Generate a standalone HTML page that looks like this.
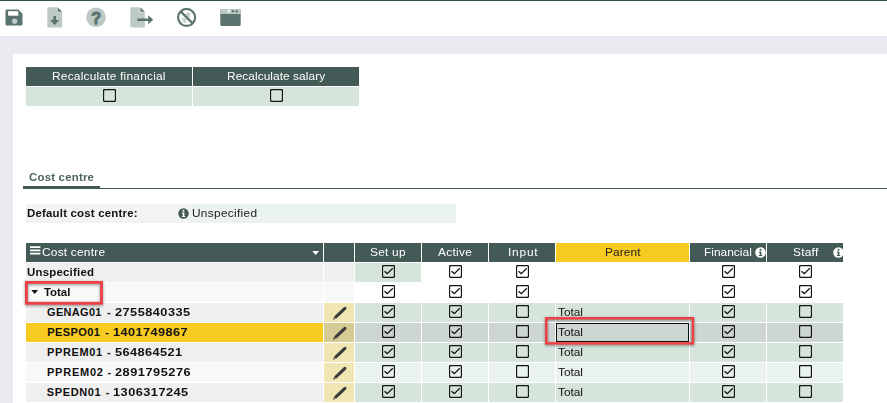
<!DOCTYPE html>
<html><head><meta charset="utf-8"><title>Cost centre</title>
<style>
*{box-sizing:border-box;margin:0;padding:0}
html,body{width:887px;height:403px;overflow:hidden;background:#eaebf0}
body{position:relative;font-family:"Liberation Sans",sans-serif;font-size:11px;color:#111}
.ab,.cb,.t,.bx{position:absolute}
.t{white-space:nowrap;line-height:14px;height:14px;transform-origin:0 0}
.w{color:#fff}
.b{font-weight:bold}
.c{text-align:center}
</style></head><body>

<div class="bx" style="left:0px;top:0px;width:887px;height:36px;background:#fff;"></div>
<div class="bx" style="left:0px;top:0px;width:887px;height:1px;background:#34504b;"></div>
<div class="bx" style="left:13px;top:54px;width:874px;height:349px;background:#fff;"></div>
<svg class="ab" style="left:5px;top:9px" width="18" height="17" viewBox="0 0 18 17"><path d="M0.5 2 Q0.5 0.5 2 0.5 L13.3 0.5 L17.5 4.7 L17.5 15 Q17.5 16.5 16 16.5 L2 16.5 Q0.5 16.5 0.5 15 Z" fill="#5b736e"/><rect x="3.1" y="2.2" width="10.2" height="4.5" fill="#fff"/><circle cx="9.6" cy="12.3" r="2.7" fill="#bcc9c5"/></svg>
<svg class="ab" style="left:47px;top:7px" width="16" height="21" viewBox="0 0 16 21"><path d="M1.5 0.3 L10 0.3 L10 5.3 L15.2 5.3 L15.2 19.2 Q15.2 20.5 14 20.5 L1.5 20.5 Q0.3 20.5 0.3 19.2 L0.3 1.5 Q0.3 0.3 1.5 0.3 Z" fill="#bcc9c5"/><path d="M10.6 0.3 L15.2 4.8 L10.6 4.8 Z" fill="#5b736e"/><path d="M6.4 9 L9 9 L9 13 L12.3 13 L7.7 18 L3.1 13 L6.4 13 Z" fill="#5b736e"/></svg>
<svg class="ab" style="left:86px;top:7px" width="20" height="20" viewBox="0 0 20 20"><circle cx="10" cy="10.3" r="9.8" fill="#bcc9c5"/><text x="10.1" y="17.1" text-anchor="middle" font-family="Liberation Sans, sans-serif" font-weight="bold" font-size="16.2" fill="#5b736e" stroke="#5b736e" stroke-width="0.9">?</text></svg>
<svg class="ab" style="left:130px;top:7px" width="24" height="21" viewBox="0 0 24 21"><path d="M1.5 0.3 L9.7 0.3 L9.7 5.3 L14.9 5.3 L14.9 19.2 Q14.9 20.5 13.7 20.5 L1.5 20.5 Q0.3 20.5 0.3 19.2 L0.3 1.5 Q0.3 0.3 1.5 0.3 Z" fill="#bcc9c5"/><path d="M10.3 0.3 L14.9 4.8 L10.3 4.8 Z" fill="#5b736e"/><path d="M7.3 11.4 L18.2 11.4 L18.2 8.2 L23.2 12.7 L18.2 17.2 L18.2 14 L7.3 14 Z" fill="#5b736e"/></svg>
<svg class="ab" style="left:176px;top:7px" width="21" height="21" viewBox="0 0 21 21"><g stroke="#bcc9c5" stroke-width="1.3" fill="none"><path d="M9.5 6.5 L14.5 9.5 M10.5 9 L14.8 6.2 M12 5 L12.6 10.5 M5.5 11.5 L10.8 14.8 M6.2 15 L10.5 11.8 M8 10.8 L8.8 16"/></g><circle cx="10.6" cy="10.45" r="8.5" fill="none" stroke="#5b736e" stroke-width="2.2"/><path d="M4.6 4.4 L16.6 16.4" stroke="#5b736e" stroke-width="2.3"/></svg>
<svg class="ab" style="left:220px;top:9px" width="21" height="18" viewBox="0 0 21 18"><rect x="0.3" y="0" width="20.4" height="16.9" rx="1.6" fill="#5b736e"/><path d="M0.3 4.9 L0.3 1.6 Q0.3 0 1.9 0 L19.1 0 Q20.7 0 20.7 1.6 L20.7 4.9 Z" fill="#bcc9c5"/><rect x="7.6" y="1.2" width="2.6" height="2.1" fill="#fff"/><circle cx="12.8" cy="2.3" r="1.2" fill="#5b736e"/><circle cx="16.7" cy="2.3" r="1.2" fill="#5b736e"/></svg>
<div class="bx" style="left:26px;top:67px;width:166px;height:19px;background:#435a56;"></div>
<div class="bx" style="left:193px;top:67px;width:166px;height:19px;background:#435a56;"></div>
<div class="bx" style="left:26px;top:87px;width:166px;height:19px;background:#d5e5db;"></div>
<div class="bx" style="left:193px;top:87px;width:166px;height:19px;background:#d5e5db;"></div>
<div class="t w" style="left:52.3px;top:69px;letter-spacing:0.210px;transform:scaleX(1.08);">Recalculate financial</div>
<div class="t w" style="left:227.4px;top:69px;letter-spacing:0.056px;transform:scaleX(1.08);">Recalculate salary</div>
<svg class="cb" style="left:103px;top:89px" width="13" height="13" viewBox="0 0 13 13"><rect x="0.5" y="0.5" width="12" height="12" rx="1.4" ry="1.4" fill="none" stroke="#151515" stroke-width="1.3"/></svg>
<svg class="cb" style="left:270px;top:89px" width="13" height="13" viewBox="0 0 13 13"><rect x="0.5" y="0.5" width="12" height="12" rx="1.4" ry="1.4" fill="none" stroke="#151515" stroke-width="1.3"/></svg>
<div class="t b" style="left:29px;top:170px;letter-spacing:0.197px;transform:scaleX(1.04);color:#4a645f;">Cost centre</div>
<div class="bx" style="left:23px;top:186px;width:77px;height:3px;background:#435a56;"></div>
<div class="bx" style="left:100px;top:188px;width:787px;height:1px;background:#435a56;"></div>
<div class="bx" style="left:26px;top:204px;width:164px;height:19px;background:#f3f3f3;"></div>
<div class="bx" style="left:190px;top:204px;width:266px;height:19px;background:#eaf3ee;"></div>
<div class="t b" style="left:27.2px;top:206px;letter-spacing:0.192px;transform:scaleX(1.04);">Default cost centre:</div>
<svg class="ab" style="left:178px;top:208px" width="11" height="11" viewBox="0 0 11 11"><circle cx="5.5" cy="5.5" r="5.2" fill="#435a56"/><rect x="4.7" y="4.6" width="1.7" height="4" fill="#fff"/><rect x="4" y="4.6" width="1.5" height="1" fill="#fff"/><rect x="3.9" y="8" width="3.3" height="1" fill="#fff"/><circle cx="5.5" cy="2.7" r="1" fill="#fff"/></svg>
<div class="t " style="left:192px;top:206px;letter-spacing:0.270px;transform:scaleX(1.08);color:#222;">Unspecified</div>
<div class="bx" style="left:26px;top:243px;width:297px;height:19px;background:#435a56;"></div>
<div class="bx" style="left:324px;top:243px;width:30px;height:19px;background:#435a56;"></div>
<div class="bx" style="left:355px;top:243px;width:66px;height:19px;background:#435a56;"></div>
<div class="bx" style="left:422px;top:243px;width:66px;height:19px;background:#435a56;"></div>
<div class="bx" style="left:489px;top:243px;width:66px;height:19px;background:#435a56;"></div>
<div class="bx" style="left:556px;top:243px;width:133px;height:19px;background:#f7cb20;"></div>
<div class="bx" style="left:690px;top:243px;width:76px;height:19px;background:#435a56;"></div>
<div class="bx" style="left:767px;top:243px;width:76px;height:19px;background:#435a56;"></div>
<svg class="ab" style="left:30px;top:246px" width="11" height="9" viewBox="0 0 11 9"><path d="M0 0.2 H10.4 V2 H0 Z M0 3.5 H10.4 V5.3 H0 Z M0 6.8 H10.4 V8.6 H0 Z" fill="#fff"/></svg>
<div class="t w" style="left:42px;top:245px;letter-spacing:0.208px;transform:scaleX(1.08);">Cost centre</div>
<svg class="ab" style="left:312px;top:251px" width="8" height="5" viewBox="0 0 8 5"><path d="M0.3 0 L7 0 L3.65 4 Z" fill="#fff"/></svg>
<div class="t w" style="left:370.4px;top:245px;letter-spacing:0.212px;transform:scaleX(1.08);">Set up</div>
<div class="t w" style="left:438.3px;top:245px;letter-spacing:0.284px;transform:scaleX(1.08);">Active</div>
<div class="t w" style="left:507.7px;top:245px;letter-spacing:0.735px;transform:scaleX(1.08);">Input</div>
<div class="t " style="left:605.2px;top:245px;letter-spacing:0.090px;transform:scaleX(1.08);color:#222;">Parent</div>
<div class="t w" style="left:704.3px;top:245px;letter-spacing:0.029px;transform:scaleX(1.08);">Financial</div>
<div class="t w" style="left:792.8px;top:245px;letter-spacing:0.224px;transform:scaleX(1.08);">Staff</div>
<svg class="ab" style="left:755px;top:247px" width="11" height="11" viewBox="0 0 11 11"><circle cx="5.5" cy="5.5" r="5.3" fill="#fff"/><rect x="4.7" y="4.6" width="1.7" height="4" fill="#435a56"/><rect x="4" y="4.6" width="1.5" height="1" fill="#435a56"/><rect x="3.9" y="8" width="3.3" height="1" fill="#435a56"/><circle cx="5.5" cy="2.7" r="1" fill="#435a56"/></svg>
<svg class="ab" style="left:833px;top:247px" width="10" height="11" viewBox="0 0 10 11"><circle cx="5.5" cy="5.5" r="5.3" fill="#fff"/><rect x="4.7" y="4.6" width="1.7" height="4" fill="#435a56"/><rect x="4" y="4.6" width="1.5" height="1" fill="#435a56"/><rect x="3.9" y="8" width="3.3" height="1" fill="#435a56"/><circle cx="5.5" cy="2.7" r="1" fill="#435a56"/></svg>
<div class="bx" style="left:26px;top:263px;width:297px;height:19px;background:#efefef;"></div>
<div class="bx" style="left:324px;top:263px;width:30px;height:19px;background:#efefef;"></div>
<div class="bx" style="left:355px;top:263px;width:66px;height:19px;background:#d5e5db;"></div>
<div class="bx" style="left:422px;top:263px;width:66px;height:19px;background:#fff;"></div>
<div class="bx" style="left:489px;top:263px;width:66px;height:19px;background:#fff;"></div>
<div class="bx" style="left:556px;top:263px;width:133px;height:19px;background:#fff;"></div>
<div class="bx" style="left:690px;top:263px;width:76px;height:19px;background:#fff;"></div>
<div class="bx" style="left:767px;top:263px;width:76px;height:19px;background:#fff;"></div>
<svg class="cb" style="left:382px;top:265px" width="13" height="13" viewBox="0 0 13 13"><rect x="0.5" y="0.5" width="12" height="12" rx="1.4" ry="1.4" fill="none" stroke="#151515" stroke-width="1.3"/><path d="M2.5 6.3 L5.3 8.6 L10.8 3.3" fill="none" stroke="#151515" stroke-width="1.3"/></svg>
<svg class="cb" style="left:449px;top:265px" width="13" height="13" viewBox="0 0 13 13"><rect x="0.5" y="0.5" width="12" height="12" rx="1.4" ry="1.4" fill="none" stroke="#151515" stroke-width="1.3"/><path d="M2.5 6.3 L5.3 8.6 L10.8 3.3" fill="none" stroke="#151515" stroke-width="1.3"/></svg>
<svg class="cb" style="left:516px;top:265px" width="13" height="13" viewBox="0 0 13 13"><rect x="0.5" y="0.5" width="12" height="12" rx="1.4" ry="1.4" fill="none" stroke="#151515" stroke-width="1.3"/><path d="M2.5 6.3 L5.3 8.6 L10.8 3.3" fill="none" stroke="#151515" stroke-width="1.3"/></svg>
<svg class="cb" style="left:722px;top:265px" width="13" height="13" viewBox="0 0 13 13"><rect x="0.5" y="0.5" width="12" height="12" rx="1.4" ry="1.4" fill="none" stroke="#151515" stroke-width="1.3"/><path d="M2.5 6.3 L5.3 8.6 L10.8 3.3" fill="none" stroke="#151515" stroke-width="1.3"/></svg>
<svg class="cb" style="left:799px;top:265px" width="13" height="13" viewBox="0 0 13 13"><rect x="0.5" y="0.5" width="12" height="12" rx="1.4" ry="1.4" fill="none" stroke="#151515" stroke-width="1.3"/><path d="M2.5 6.3 L5.3 8.6 L10.8 3.3" fill="none" stroke="#151515" stroke-width="1.3"/></svg>
<div class="t b" style="left:27px;top:265px;letter-spacing:0.206px;transform:scaleX(1.04);">Unspecified</div>
<div class="bx" style="left:26px;top:283px;width:297px;height:19px;background:#f8f8f8;"></div>
<div class="bx" style="left:324px;top:283px;width:30px;height:19px;background:#f8f8f8;"></div>
<div class="bx" style="left:355px;top:283px;width:66px;height:19px;background:#fff;"></div>
<div class="bx" style="left:422px;top:283px;width:66px;height:19px;background:#fff;"></div>
<div class="bx" style="left:489px;top:283px;width:66px;height:19px;background:#fff;"></div>
<div class="bx" style="left:556px;top:283px;width:133px;height:19px;background:#fff;"></div>
<div class="bx" style="left:690px;top:283px;width:76px;height:19px;background:#fff;"></div>
<div class="bx" style="left:767px;top:283px;width:76px;height:19px;background:#fff;"></div>
<svg class="cb" style="left:382px;top:285px" width="13" height="13" viewBox="0 0 13 13"><rect x="0.5" y="0.5" width="12" height="12" rx="1.4" ry="1.4" fill="none" stroke="#151515" stroke-width="1.3"/><path d="M2.5 6.3 L5.3 8.6 L10.8 3.3" fill="none" stroke="#151515" stroke-width="1.3"/></svg>
<svg class="cb" style="left:449px;top:285px" width="13" height="13" viewBox="0 0 13 13"><rect x="0.5" y="0.5" width="12" height="12" rx="1.4" ry="1.4" fill="none" stroke="#151515" stroke-width="1.3"/><path d="M2.5 6.3 L5.3 8.6 L10.8 3.3" fill="none" stroke="#151515" stroke-width="1.3"/></svg>
<svg class="cb" style="left:516px;top:285px" width="13" height="13" viewBox="0 0 13 13"><rect x="0.5" y="0.5" width="12" height="12" rx="1.4" ry="1.4" fill="none" stroke="#151515" stroke-width="1.3"/><path d="M2.5 6.3 L5.3 8.6 L10.8 3.3" fill="none" stroke="#151515" stroke-width="1.3"/></svg>
<svg class="cb" style="left:722px;top:285px" width="13" height="13" viewBox="0 0 13 13"><rect x="0.5" y="0.5" width="12" height="12" rx="1.4" ry="1.4" fill="none" stroke="#151515" stroke-width="1.3"/><path d="M2.5 6.3 L5.3 8.6 L10.8 3.3" fill="none" stroke="#151515" stroke-width="1.3"/></svg>
<svg class="cb" style="left:799px;top:285px" width="13" height="13" viewBox="0 0 13 13"><rect x="0.5" y="0.5" width="12" height="12" rx="1.4" ry="1.4" fill="none" stroke="#151515" stroke-width="1.3"/><path d="M2.5 6.3 L5.3 8.6 L10.8 3.3" fill="none" stroke="#151515" stroke-width="1.3"/></svg>
<div class="t b" style="left:44.2px;top:285px;letter-spacing:-0.021px;transform:scaleX(1.04);">Total</div>
<div class="bx" style="left:26px;top:303px;width:297px;height:19px;background:#efefef;"></div>
<div class="bx" style="left:324px;top:303px;width:30px;height:19px;background:#f0e6b4;"></div>
<svg class="ab" style="left:332px;top:306px" width="15" height="15" viewBox="0 0 15 15"><path d="M0.9 13.8 L1.9 11.6 L2.6 11.9 L2.2 10.4 L11.8 1.2 Q13.1 0.2 14.1 1.15 Q15 2.1 14 3.4 L4.4 12.6 L2.9 12.3 L3.1 12.9 Z" fill="#3c3c3c"/></svg>
<div class="bx" style="left:355px;top:303px;width:66px;height:19px;background:#d5e5db;"></div>
<div class="bx" style="left:422px;top:303px;width:66px;height:19px;background:#d5e5db;"></div>
<div class="bx" style="left:489px;top:303px;width:66px;height:19px;background:#d5e5db;"></div>
<div class="bx" style="left:556px;top:303px;width:133px;height:19px;background:#d5e5db;"></div>
<div class="bx" style="left:690px;top:303px;width:76px;height:19px;background:#d5e5db;"></div>
<div class="bx" style="left:767px;top:303px;width:76px;height:19px;background:#d5e5db;"></div>
<svg class="cb" style="left:382px;top:305px" width="13" height="13" viewBox="0 0 13 13"><rect x="0.5" y="0.5" width="12" height="12" rx="1.4" ry="1.4" fill="none" stroke="#151515" stroke-width="1.3"/><path d="M2.5 6.3 L5.3 8.6 L10.8 3.3" fill="none" stroke="#151515" stroke-width="1.3"/></svg>
<svg class="cb" style="left:449px;top:305px" width="13" height="13" viewBox="0 0 13 13"><rect x="0.5" y="0.5" width="12" height="12" rx="1.4" ry="1.4" fill="none" stroke="#151515" stroke-width="1.3"/><path d="M2.5 6.3 L5.3 8.6 L10.8 3.3" fill="none" stroke="#151515" stroke-width="1.3"/></svg>
<svg class="cb" style="left:516px;top:305px" width="13" height="13" viewBox="0 0 13 13"><rect x="0.5" y="0.5" width="12" height="12" rx="1.4" ry="1.4" fill="none" stroke="#151515" stroke-width="1.3"/></svg>
<svg class="cb" style="left:722px;top:305px" width="13" height="13" viewBox="0 0 13 13"><rect x="0.5" y="0.5" width="12" height="12" rx="1.4" ry="1.4" fill="none" stroke="#151515" stroke-width="1.3"/><path d="M2.5 6.3 L5.3 8.6 L10.8 3.3" fill="none" stroke="#151515" stroke-width="1.3"/></svg>
<svg class="cb" style="left:799px;top:305px" width="13" height="13" viewBox="0 0 13 13"><rect x="0.5" y="0.5" width="12" height="12" rx="1.4" ry="1.4" fill="none" stroke="#151515" stroke-width="1.3"/></svg>
<div class="t " style="left:558.4px;top:305px;letter-spacing:-0.049px;transform:scaleX(1.08);color:#111;">Total</div>
<div class="t b" style="left:47px;top:305px;letter-spacing:0.320px;">GENAG01</div>
<div class="t b" style="left:106.9px;top:305px;">-</div>
<div class="t b" style="left:114.7px;top:305px;letter-spacing:0.395px;transform:scaleX(1.16);">2755840335</div>
<div class="bx" style="left:26px;top:323px;width:297px;height:19px;background:#f7cb20;"></div>
<div class="bx" style="left:324px;top:323px;width:30px;height:19px;background:#d6cb95;"></div>
<svg class="ab" style="left:332px;top:326px" width="15" height="15" viewBox="0 0 15 15"><path d="M0.9 13.8 L1.9 11.6 L2.6 11.9 L2.2 10.4 L11.8 1.2 Q13.1 0.2 14.1 1.15 Q15 2.1 14 3.4 L4.4 12.6 L2.9 12.3 L3.1 12.9 Z" fill="#3c3c3c"/></svg>
<div class="bx" style="left:355px;top:323px;width:66px;height:19px;background:#cdd6d2;"></div>
<div class="bx" style="left:422px;top:323px;width:66px;height:19px;background:#cdd6d2;"></div>
<div class="bx" style="left:489px;top:323px;width:66px;height:19px;background:#cdd6d2;"></div>
<div class="bx" style="left:556px;top:323px;width:133px;height:19px;background:#cdd6d2;"></div>
<div class="bx" style="left:690px;top:323px;width:76px;height:19px;background:#cdd6d2;"></div>
<div class="bx" style="left:767px;top:323px;width:76px;height:19px;background:#cdd6d2;"></div>
<svg class="cb" style="left:382px;top:325px" width="13" height="13" viewBox="0 0 13 13"><rect x="0.5" y="0.5" width="12" height="12" rx="1.4" ry="1.4" fill="none" stroke="#151515" stroke-width="1.3"/><path d="M2.5 6.3 L5.3 8.6 L10.8 3.3" fill="none" stroke="#151515" stroke-width="1.3"/></svg>
<svg class="cb" style="left:449px;top:325px" width="13" height="13" viewBox="0 0 13 13"><rect x="0.5" y="0.5" width="12" height="12" rx="1.4" ry="1.4" fill="none" stroke="#151515" stroke-width="1.3"/><path d="M2.5 6.3 L5.3 8.6 L10.8 3.3" fill="none" stroke="#151515" stroke-width="1.3"/></svg>
<svg class="cb" style="left:516px;top:325px" width="13" height="13" viewBox="0 0 13 13"><rect x="0.5" y="0.5" width="12" height="12" rx="1.4" ry="1.4" fill="none" stroke="#151515" stroke-width="1.3"/></svg>
<svg class="cb" style="left:722px;top:325px" width="13" height="13" viewBox="0 0 13 13"><rect x="0.5" y="0.5" width="12" height="12" rx="1.4" ry="1.4" fill="none" stroke="#151515" stroke-width="1.3"/><path d="M2.5 6.3 L5.3 8.6 L10.8 3.3" fill="none" stroke="#151515" stroke-width="1.3"/></svg>
<svg class="cb" style="left:799px;top:325px" width="13" height="13" viewBox="0 0 13 13"><rect x="0.5" y="0.5" width="12" height="12" rx="1.4" ry="1.4" fill="none" stroke="#151515" stroke-width="1.3"/></svg>
<div class="t " style="left:558.4px;top:325px;letter-spacing:-0.049px;transform:scaleX(1.08);color:#111;">Total</div>
<div class="t b" style="left:47.3px;top:325px;letter-spacing:0.393px;">PESPO01</div>
<div class="t b" style="left:105.2px;top:325px;">-</div>
<div class="t b" style="left:113.3px;top:325px;letter-spacing:0.337px;transform:scaleX(1.16);">1401749867</div>
<div class="bx" style="left:26px;top:343px;width:297px;height:19px;background:#efefef;"></div>
<div class="bx" style="left:324px;top:343px;width:30px;height:19px;background:#f0e6b4;"></div>
<svg class="ab" style="left:332px;top:346px" width="15" height="15" viewBox="0 0 15 15"><path d="M0.9 13.8 L1.9 11.6 L2.6 11.9 L2.2 10.4 L11.8 1.2 Q13.1 0.2 14.1 1.15 Q15 2.1 14 3.4 L4.4 12.6 L2.9 12.3 L3.1 12.9 Z" fill="#3c3c3c"/></svg>
<div class="bx" style="left:355px;top:343px;width:66px;height:19px;background:#d5e5db;"></div>
<div class="bx" style="left:422px;top:343px;width:66px;height:19px;background:#d5e5db;"></div>
<div class="bx" style="left:489px;top:343px;width:66px;height:19px;background:#d5e5db;"></div>
<div class="bx" style="left:556px;top:343px;width:133px;height:19px;background:#d5e5db;"></div>
<div class="bx" style="left:690px;top:343px;width:76px;height:19px;background:#d5e5db;"></div>
<div class="bx" style="left:767px;top:343px;width:76px;height:19px;background:#d5e5db;"></div>
<svg class="cb" style="left:382px;top:345px" width="13" height="13" viewBox="0 0 13 13"><rect x="0.5" y="0.5" width="12" height="12" rx="1.4" ry="1.4" fill="none" stroke="#151515" stroke-width="1.3"/><path d="M2.5 6.3 L5.3 8.6 L10.8 3.3" fill="none" stroke="#151515" stroke-width="1.3"/></svg>
<svg class="cb" style="left:449px;top:345px" width="13" height="13" viewBox="0 0 13 13"><rect x="0.5" y="0.5" width="12" height="12" rx="1.4" ry="1.4" fill="none" stroke="#151515" stroke-width="1.3"/><path d="M2.5 6.3 L5.3 8.6 L10.8 3.3" fill="none" stroke="#151515" stroke-width="1.3"/></svg>
<svg class="cb" style="left:516px;top:345px" width="13" height="13" viewBox="0 0 13 13"><rect x="0.5" y="0.5" width="12" height="12" rx="1.4" ry="1.4" fill="none" stroke="#151515" stroke-width="1.3"/></svg>
<svg class="cb" style="left:722px;top:345px" width="13" height="13" viewBox="0 0 13 13"><rect x="0.5" y="0.5" width="12" height="12" rx="1.4" ry="1.4" fill="none" stroke="#151515" stroke-width="1.3"/><path d="M2.5 6.3 L5.3 8.6 L10.8 3.3" fill="none" stroke="#151515" stroke-width="1.3"/></svg>
<svg class="cb" style="left:799px;top:345px" width="13" height="13" viewBox="0 0 13 13"><rect x="0.5" y="0.5" width="12" height="12" rx="1.4" ry="1.4" fill="none" stroke="#151515" stroke-width="1.3"/></svg>
<div class="t " style="left:558.4px;top:345px;letter-spacing:-0.049px;transform:scaleX(1.08);color:#111;">Total</div>
<div class="t b" style="left:47px;top:345px;letter-spacing:0.607px;">PPREM01</div>
<div class="t b" style="left:106.9px;top:345px;">-</div>
<div class="t b" style="left:114.7px;top:345px;letter-spacing:0.348px;transform:scaleX(1.16);">564864521</div>
<div class="bx" style="left:26px;top:363px;width:297px;height:19px;background:#f8f8f8;"></div>
<div class="bx" style="left:324px;top:363px;width:30px;height:19px;background:#f0e6b4;"></div>
<svg class="ab" style="left:332px;top:366px" width="15" height="15" viewBox="0 0 15 15"><path d="M0.9 13.8 L1.9 11.6 L2.6 11.9 L2.2 10.4 L11.8 1.2 Q13.1 0.2 14.1 1.15 Q15 2.1 14 3.4 L4.4 12.6 L2.9 12.3 L3.1 12.9 Z" fill="#3c3c3c"/></svg>
<div class="bx" style="left:355px;top:363px;width:66px;height:19px;background:#eaf3ee;"></div>
<div class="bx" style="left:422px;top:363px;width:66px;height:19px;background:#eaf3ee;"></div>
<div class="bx" style="left:489px;top:363px;width:66px;height:19px;background:#eaf3ee;"></div>
<div class="bx" style="left:556px;top:363px;width:133px;height:19px;background:#eaf3ee;"></div>
<div class="bx" style="left:690px;top:363px;width:76px;height:19px;background:#eaf3ee;"></div>
<div class="bx" style="left:767px;top:363px;width:76px;height:19px;background:#eaf3ee;"></div>
<svg class="cb" style="left:382px;top:365px" width="13" height="13" viewBox="0 0 13 13"><rect x="0.5" y="0.5" width="12" height="12" rx="1.4" ry="1.4" fill="none" stroke="#151515" stroke-width="1.3"/><path d="M2.5 6.3 L5.3 8.6 L10.8 3.3" fill="none" stroke="#151515" stroke-width="1.3"/></svg>
<svg class="cb" style="left:449px;top:365px" width="13" height="13" viewBox="0 0 13 13"><rect x="0.5" y="0.5" width="12" height="12" rx="1.4" ry="1.4" fill="none" stroke="#151515" stroke-width="1.3"/><path d="M2.5 6.3 L5.3 8.6 L10.8 3.3" fill="none" stroke="#151515" stroke-width="1.3"/></svg>
<svg class="cb" style="left:516px;top:365px" width="13" height="13" viewBox="0 0 13 13"><rect x="0.5" y="0.5" width="12" height="12" rx="1.4" ry="1.4" fill="none" stroke="#151515" stroke-width="1.3"/></svg>
<svg class="cb" style="left:722px;top:365px" width="13" height="13" viewBox="0 0 13 13"><rect x="0.5" y="0.5" width="12" height="12" rx="1.4" ry="1.4" fill="none" stroke="#151515" stroke-width="1.3"/><path d="M2.5 6.3 L5.3 8.6 L10.8 3.3" fill="none" stroke="#151515" stroke-width="1.3"/></svg>
<svg class="cb" style="left:799px;top:365px" width="13" height="13" viewBox="0 0 13 13"><rect x="0.5" y="0.5" width="12" height="12" rx="1.4" ry="1.4" fill="none" stroke="#151515" stroke-width="1.3"/></svg>
<div class="t " style="left:558.4px;top:365px;letter-spacing:-0.049px;transform:scaleX(1.08);color:#111;">Total</div>
<div class="t b" style="left:47px;top:365px;letter-spacing:0.757px;">PPREM02</div>
<div class="t b" style="left:107.4px;top:365px;">-</div>
<div class="t b" style="left:114.7px;top:365px;letter-spacing:0.443px;transform:scaleX(1.16);">2891795276</div>
<div class="bx" style="left:26px;top:383px;width:297px;height:19px;background:#efefef;"></div>
<div class="bx" style="left:324px;top:383px;width:30px;height:19px;background:#f0e6b4;"></div>
<svg class="ab" style="left:332px;top:386px" width="15" height="15" viewBox="0 0 15 15"><path d="M0.9 13.8 L1.9 11.6 L2.6 11.9 L2.2 10.4 L11.8 1.2 Q13.1 0.2 14.1 1.15 Q15 2.1 14 3.4 L4.4 12.6 L2.9 12.3 L3.1 12.9 Z" fill="#3c3c3c"/></svg>
<div class="bx" style="left:355px;top:383px;width:66px;height:19px;background:#d5e5db;"></div>
<div class="bx" style="left:422px;top:383px;width:66px;height:19px;background:#d5e5db;"></div>
<div class="bx" style="left:489px;top:383px;width:66px;height:19px;background:#d5e5db;"></div>
<div class="bx" style="left:556px;top:383px;width:133px;height:19px;background:#d5e5db;"></div>
<div class="bx" style="left:690px;top:383px;width:76px;height:19px;background:#d5e5db;"></div>
<div class="bx" style="left:767px;top:383px;width:76px;height:19px;background:#d5e5db;"></div>
<svg class="cb" style="left:382px;top:385px" width="13" height="13" viewBox="0 0 13 13"><rect x="0.5" y="0.5" width="12" height="12" rx="1.4" ry="1.4" fill="none" stroke="#151515" stroke-width="1.3"/><path d="M2.5 6.3 L5.3 8.6 L10.8 3.3" fill="none" stroke="#151515" stroke-width="1.3"/></svg>
<svg class="cb" style="left:449px;top:385px" width="13" height="13" viewBox="0 0 13 13"><rect x="0.5" y="0.5" width="12" height="12" rx="1.4" ry="1.4" fill="none" stroke="#151515" stroke-width="1.3"/><path d="M2.5 6.3 L5.3 8.6 L10.8 3.3" fill="none" stroke="#151515" stroke-width="1.3"/></svg>
<svg class="cb" style="left:516px;top:385px" width="13" height="13" viewBox="0 0 13 13"><rect x="0.5" y="0.5" width="12" height="12" rx="1.4" ry="1.4" fill="none" stroke="#151515" stroke-width="1.3"/></svg>
<svg class="cb" style="left:722px;top:385px" width="13" height="13" viewBox="0 0 13 13"><rect x="0.5" y="0.5" width="12" height="12" rx="1.4" ry="1.4" fill="none" stroke="#151515" stroke-width="1.3"/><path d="M2.5 6.3 L5.3 8.6 L10.8 3.3" fill="none" stroke="#151515" stroke-width="1.3"/></svg>
<svg class="cb" style="left:799px;top:385px" width="13" height="13" viewBox="0 0 13 13"><rect x="0.5" y="0.5" width="12" height="12" rx="1.4" ry="1.4" fill="none" stroke="#151515" stroke-width="1.3"/></svg>
<div class="t " style="left:558.4px;top:385px;letter-spacing:-0.049px;transform:scaleX(1.08);color:#111;">Total</div>
<div class="t b" style="left:46.7px;top:385px;letter-spacing:0.643px;">SPEDN01</div>
<div class="t b" style="left:105.7px;top:385px;">-</div>
<div class="t b" style="left:113.3px;top:385px;letter-spacing:0.404px;transform:scaleX(1.16);">1306317245</div>
<svg class="ab" style="left:31px;top:290px" width="8" height="5" viewBox="0 0 8 5"><path d="M0.3 0 L7 0 L3.65 4 Z" fill="#111"/></svg>
<div class="bx" style="left:556px;top:323px;width:133px;height:19px;border:1px solid #111"></div>
<svg class="ab" style="left:19.1px;top:275.1px;filter:drop-shadow(0 1px 1.5px rgba(0,0,0,.45))" width="89.9" height="35.69999999999999" viewBox="0 0 89.9 35.69999999999999"><rect x="7.4" y="7.4" width="75.10000000000001" height="20.899999999999988" fill="none" stroke="#f03f46" stroke-width="2.8"/></svg>
<svg class="ab" style="left:539px;top:311.4px;filter:drop-shadow(0 1px 1.5px rgba(0,0,0,.45))" width="161.20000000000005" height="39.60000000000002" viewBox="0 0 161.20000000000005 39.60000000000002"><rect x="7.25" y="7.25" width="146.70000000000005" height="25.100000000000023" fill="none" stroke="#f03f46" stroke-width="2.5"/></svg>
</body></html>
